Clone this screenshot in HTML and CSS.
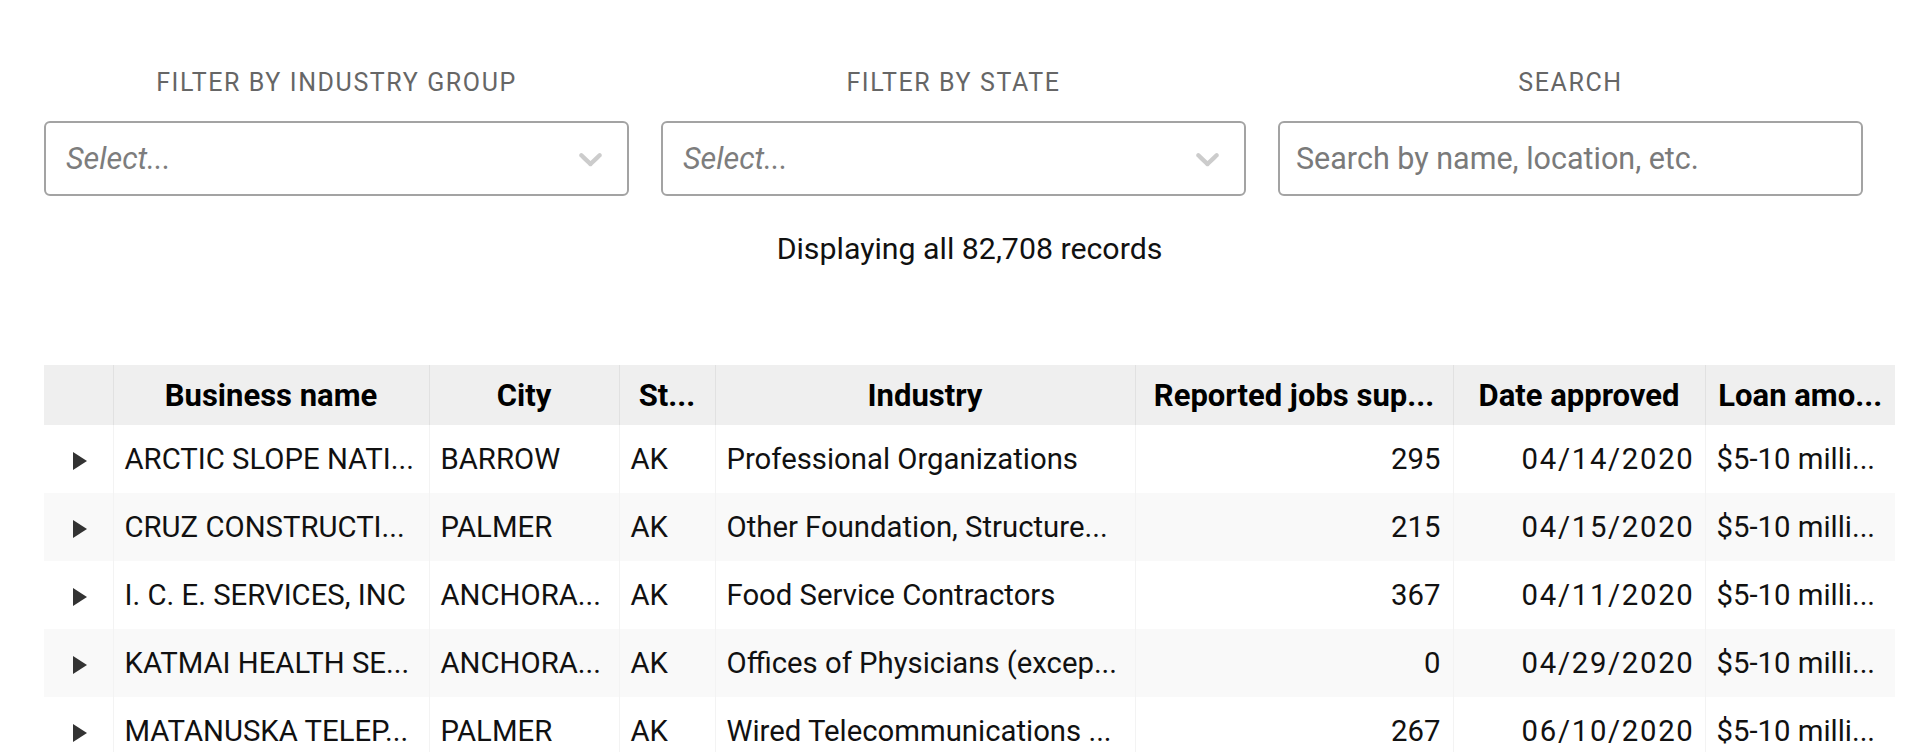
FILE: index.html
```html
<!DOCTYPE html>
<html lang="en">
<head>
<meta charset="utf-8">
<title>PPP loans</title>
<link rel="stylesheet" href="styles.css">
</head>
<body>
<div class="page">
  <div class="filters">
    <div class="filter">
      <div class="filter-inner">
        <div class="filter-label">Filter by industry group</div>
        <div class="select">
          <span class="placeholder">Select...</span>
          <svg class="chevron" width="39" height="39" viewBox="0 0 20 20" aria-hidden="true"><path d="M4.516 7.548c0.436-0.446 1.043-0.481 1.576 0l3.908 3.747 3.908-3.747c0.533-0.481 1.141-0.446 1.574 0 0.436 0.445 0.408 1.197 0 1.615-0.406 0.418-4.695 4.502-4.695 4.502-0.217 0.223-0.502 0.335-0.787 0.335s-0.57-0.112-0.789-0.335c0 0-4.287-4.084-4.695-4.502s-0.436-1.17 0-1.615z"/></svg>
        </div>
      </div>
    </div>
    <div class="filter">
      <div class="filter-inner">
        <div class="filter-label">Filter by state</div>
        <div class="select">
          <span class="placeholder">Select...</span>
          <svg class="chevron" width="39" height="39" viewBox="0 0 20 20" aria-hidden="true"><path d="M4.516 7.548c0.436-0.446 1.043-0.481 1.576 0l3.908 3.747 3.908-3.747c0.533-0.481 1.141-0.446 1.574 0 0.436 0.445 0.408 1.197 0 1.615-0.406 0.418-4.695 4.502-4.695 4.502-0.217 0.223-0.502 0.335-0.787 0.335s-0.57-0.112-0.789-0.335c0 0-4.287-4.084-4.695-4.502s-0.436-1.17 0-1.615z"/></svg>
        </div>
      </div>
    </div>
    <div class="filter">
      <div class="filter-inner">
        <div class="filter-label">Search</div>
        <input class="search" type="text" placeholder="Search by name, location, etc.">
      </div>
    </div>
  </div>

  <p class="count">Displaying all 82,708 records</p>

  <table class="grid">
    <colgroup>
      <col class="c-exp">
      <col class="c-name">
      <col class="c-city">
      <col class="c-state">
      <col class="c-ind">
      <col class="c-jobs">
      <col class="c-date">
      <col class="c-loan">
    </colgroup>
    <thead>
      <tr>
        <th></th>
        <th>Business name</th>
        <th>City</th>
        <th>St...</th>
        <th>Industry</th>
        <th>Reported jobs sup...</th>
        <th>Date approved</th>
        <th>Loan amo...</th>
      </tr>
    </thead>
    <tbody>
      <tr>
        <td class="exp"><span class="tri"></span></td>
        <td>ARCTIC SLOPE NATI...</td>
        <td>BARROW</td>
        <td>AK</td>
        <td>Professional Organizations</td>
        <td class="num">295</td>
        <td class="num date">04/14/2020</td>
        <td>$5-10 milli...</td>
      </tr>
      <tr>
        <td class="exp"><span class="tri"></span></td>
        <td>CRUZ CONSTRUCTI...</td>
        <td>PALMER</td>
        <td>AK</td>
        <td>Other Foundation, Structure...</td>
        <td class="num">215</td>
        <td class="num date">04/15/2020</td>
        <td>$5-10 milli...</td>
      </tr>
      <tr>
        <td class="exp"><span class="tri"></span></td>
        <td>I. C. E. SERVICES, INC</td>
        <td>ANCHORA...</td>
        <td>AK</td>
        <td>Food Service Contractors</td>
        <td class="num">367</td>
        <td class="num date">04/11/2020</td>
        <td>$5-10 milli...</td>
      </tr>
      <tr>
        <td class="exp"><span class="tri"></span></td>
        <td>KATMAI HEALTH SE...</td>
        <td>ANCHORA...</td>
        <td>AK</td>
        <td>Offices of Physicians (excep...</td>
        <td class="num">0</td>
        <td class="num date">04/29/2020</td>
        <td>$5-10 milli...</td>
      </tr>
      <tr>
        <td class="exp"><span class="tri"></span></td>
        <td>MATANUSKA TELEP...</td>
        <td>PALMER</td>
        <td>AK</td>
        <td>Wired Telecommunications ...</td>
        <td class="num">267</td>
        <td class="num date">06/10/2020</td>
        <td>$5-10 milli...</td>
      </tr>
    </tbody>
  </table>
</div>
</body>
</html>
```

FILE: styles.css
```css
html, body {
  margin: 0;
  padding: 0;
  background: #fff;
}

body {
  font-family: Roboto, "Liberation Sans", Arial, sans-serif;
  color: #111;
}

.page {
  width: 1851px;
  margin-left: 44px;
  padding-top: 68px;
}

.filters {
  display: grid;
  grid-template-columns: repeat(3, 1fr);
}

.filter {
  padding-right: 32px;
}

.filter-inner {
  display: flex;
  flex-direction: column;
  align-items: stretch;
}

.filter-label {
  text-align: center;
  text-transform: uppercase;
  font-size: 25px;
  line-height: 30px;
  letter-spacing: 1.6px;
  color: #666;
  margin-bottom: 23px;
}

.select {
  box-sizing: border-box;
  height: 75px;
  border: 2px solid #a3a3a3;
  border-radius: 6px;
  display: flex;
  align-items: center;
  justify-content: space-between;
  padding: 0 17px 0 20px;
}

.placeholder {
  font-style: italic;
  font-size: 30.5px;
  color: #7d7d7d;
}

.chevron {
  fill: #cccccc;
  display: block;
}

.search {
  box-sizing: border-box;
  height: 75px;
  width: 100%;
  border: 2px solid #a3a3a3;
  border-radius: 6px;
  padding: 0 16px;
  font-family: Roboto, "Liberation Sans", Arial, sans-serif;
  font-size: 30.5px;
  color: #111;
  outline: none;
}

.search::placeholder {
  color: #7a7a7a;
}

.count {
  margin: 35px 0 0;
  text-align: center;
  font-size: 30.3px;
  line-height: 36px;
  color: #111;
}

.grid {
  margin-top: 98px;
  width: 1851px;
  table-layout: fixed;
  border-collapse: collapse;
  border-spacing: 0;
}

.c-exp { width: 69px; }
.c-name { width: 316px; }
.c-city { width: 190px; }
.c-state { width: 96px; }
.c-ind { width: 420px; }
.c-jobs { width: 318px; }
.c-date { width: 252px; }
.c-loan { width: 190px; }

.grid th {
  height: 60px;
  padding: 0 8px;
  background: #efefef;
  font-weight: 700;
  font-size: 31px;
  color: #000;
  text-align: center;
  white-space: nowrap;
  overflow: hidden;
  border-right: 1px solid #e1e1e1;
}

.grid td {
  height: 68px;
  padding: 0 6px 0 11px;
  font-size: 29.3px;
  color: #111;
  white-space: nowrap;
  overflow: hidden;
  border-right: 1px solid #f3f3f3;
}

.grid th:last-child,
.grid td:last-child {
  border-right: none;
}

.grid tbody tr:nth-child(even) td {
  background: #f9f9f9;
}

.grid td.num {
  text-align: right;
  padding: 0 12px 0 6px;
}

.grid td.date {
  letter-spacing: 1.7px;
  padding-right: 10px;
}

.grid td.exp {
  padding: 0;
  text-align: center;
}

.tri {
  display: inline-block;
  width: 0;
  height: 0;
  border-top: 9.5px solid transparent;
  border-bottom: 9.5px solid transparent;
  border-left: 14px solid #333;
  vertical-align: middle;
  margin-left: 4px;
}
```
